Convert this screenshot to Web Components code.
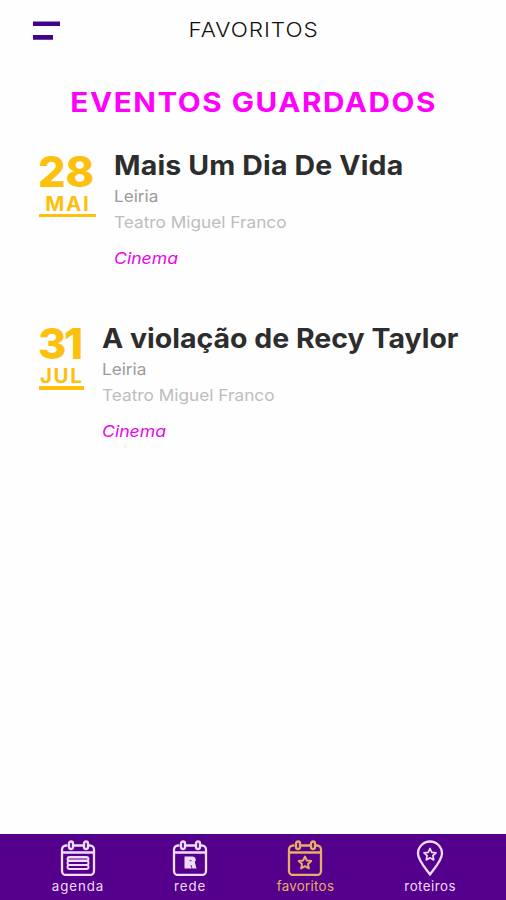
<!DOCTYPE html>
<html lang="pt">
<head>
<meta charset="utf-8">
<title>Favoritos</title>
<style>
  body {
    margin: 0;
    background: #fefefe;
    font-family: Inter, "Open Sans", sans-serif;
  }
</style>
</head>
<body>
<favorites-app>
  <app-header slot="header">FAVORITOS</app-header>
  <section-title>EVENTOS GUARDADOS</section-title>
  <event-card day="28" month="MAI" city="Leiria" venue="Teatro Miguel Franco" category="Cinema"
    style="--date-width: 57.5px; --title-spacing: 0.15px">Mais Um Dia De Vida</event-card>
  <event-card day="31" month="JUL" city="Leiria" venue="Teatro Miguel Franco" category="Cinema"
    style="--date-width: 45.5px; --day-spacing: -2.4px">A violação de Recy Taylor</event-card>
  <nav-bar slot="footer">
    <nav-item icon="agenda" style="width: 51px; --spacing: 0.9px">agenda</nav-item>
    <nav-item icon="rede" style="width: 32px; --spacing: 0.9px">rede</nav-item>
    <nav-item icon="favoritos" active style="width: 58px; --spacing: 0.3px">favoritos</nav-item>
    <nav-item icon="roteiros" style="width: 50px; --spacing: 0.5px">roteiros</nav-item>
  </nav-bar>
</favorites-app>

<script>
class FavoritesApp extends HTMLElement {
  constructor() {
    super();
    this.attachShadow({ mode: 'open' });
  }

  connectedCallback() {
    this.shadowRoot.innerHTML = `
      <style>
        :host {
          display: flex;
          flex-direction: column;
          height: 900px;
          overflow: hidden;
        }
        main { flex: 1; }
      </style>
      <slot name="header"></slot>
      <main><slot></slot></main>
      <slot name="footer"></slot>
    `;
  }
}

class AppHeader extends HTMLElement {
  constructor() {
    super();
    this.attachShadow({ mode: 'open' });
  }

  connectedCallback() {
    this.shadowRoot.innerHTML = `
      <style>
        :host {
          display: grid;
          grid-template-columns: 60px 1fr 60px;
          align-items: center;
          height: 59px;
          padding: 0 0 0 33px;
          box-sizing: border-box;
        }
        .menu { display: block; }
        h1 {
          margin: 0;
          justify-self: center;
          font-size: 20.5px;
          font-weight: 300;
          line-height: 59px;
          letter-spacing: 0.85px;
          color: #111;
          transform: translateX(-15.5px) scaleX(1.1);
        }
      </style>
      <svg class="menu" width="28" height="22" viewBox="0 0 28 22">
        <path d="M0 4.700h27M0 18.400h20" stroke="#40038a" stroke-width="4.600"/>
      </svg>
      <h1><slot></slot></h1>
    `;
  }
}

class SectionTitle extends HTMLElement {
  constructor() {
    super();
    this.attachShadow({ mode: 'open' });
  }

  connectedCallback() {
    this.shadowRoot.innerHTML = `
      <style>
        :host {
          display: flex;
          justify-content: center;
          padding: 24px 0 21px;
        }
        h2 {
          margin: 0;
          font-size: 27px;
          font-weight: 650;
          line-height: 40px;
          letter-spacing: 1.4px;
          white-space: nowrap;
          color: #ff00fc;
          transform: translateX(1px) scaleX(1.1);
        }
      </style>
      <h2><slot></slot></h2>
    `;
  }
}

class EventCard extends HTMLElement {
  constructor() {
    super();
    this.attachShadow({ mode: 'open' });
  }

  connectedCallback() {
    const day = this.getAttribute('day');
    const month = this.getAttribute('month');
    const city = this.getAttribute('city');
    const venue = this.getAttribute('venue');
    const category = this.getAttribute('category');

    this.shadowRoot.innerHTML = `
      <style>
        :host {
          display: flex;
          gap: 17.5px;
          padding-left: 38.5px;
          height: 133px;
          margin-bottom: 39.5px;
          white-space: nowrap;
        }
        .date {
          width: var(--date-width);
          color: #fdc10d;
          font-weight: 800;
        }
        .day {
          padding-top: 6.5px;
          font-size: 42px;
          line-height: 42px;
          letter-spacing: var(--day-spacing, 0);
          transform: translateX(-1px) scaleX(1.03);
          transform-origin: left;
        }
        .month {
          margin-top: 3px;
          font-size: 19.5px;
          font-weight: 750;
          line-height: 17px;
          letter-spacing: 1.6px;
          text-align: center;
          transform: scaleX(1.05);
        }
        .line {
          height: 3.5px;
          margin-top: 1px;
          background: #fdc10d;
        }
        .info > * {
          margin: 0;
          transform-origin: left;
        }
        h3 {
          font-size: 27px;
          font-weight: 700;
          line-height: 43px;
          letter-spacing: var(--title-spacing, 0);
          color: #2d2d2d;
          transform: scaleX(1.055);
        }
        .city {
          font-size: 16.5px;
          line-height: 18px;
          color: #9b9b9b;
          transform: scaleX(1.04);
        }
        .venue {
          font-size: 16.5px;
          line-height: 34px;
          color: #bdbdbd;
          transform: scaleX(1.045);
        }
        .category {
          font-size: 16.5px;
          font-style: italic;
          line-height: 38px;
          color: #e807e8;
          transform: scaleX(1.07);
        }
      </style>
      <div class="date">
        <div class="day">${day}</div>
        <div class="month">${month}</div>
        <div class="line"></div>
      </div>
      <div class="info">
        <h3><slot></slot></h3>
        <p class="city">${city}</p>
        <p class="venue">${venue}</p>
        <p class="category">${category}</p>
      </div>
    `;
  }
}

class NavBar extends HTMLElement {
  constructor() {
    super();
    this.attachShadow({ mode: 'open' });
  }

  connectedCallback() {
    this.shadowRoot.innerHTML = `
      <style>
        :host {
          display: flex;
          justify-content: space-between;
          height: 66.5px;
          padding: 6.5px 51px 0 52px;
          box-sizing: border-box;
          background: #54008c;
        }
      </style>
      <slot></slot>
    `;
  }
}

const calendar = `
  <path d="M7.500 5.500H6A4 4 0 0 0 2 9.500V31a4 4 0 0 0 4 4h24a4 4 0 0 0 4-4V9.500A4 4 0 0 0 30 5.500h-1.500M12.500 5.500h11M2 12.500h32"/>
  <rect x="9" y="1.500" width="4" height="7.500" rx="2"/>
  <rect x="24" y="1.500" width="4" height="7.500" rx="2"/>
`;

const icons = {
  agenda: calendar + `
    <rect x="7.500" y="17" width="21" height="4" rx="2" fill="currentColor" fill-opacity="0.5" stroke-width="1.900"/>
    <path d="M9.500 21a2 2 0 0 0 0 4h17a2 2 0 0 0 0-4" stroke-width="1.900"/>
    <rect x="7.500" y="25" width="21" height="4" rx="2" stroke-width="1.900"/>
  `,
  rede: calendar + `
    <path d="M12.500 16.500h8a3.200 3.200 0 0 1 2.300 5.500l1.700 6.500h-12z" fill="currentColor" stroke="none"/>
    <path d="M17.500 20.700h2M19 25l1 3.500" stroke="#54008c" stroke-width="0.800"/>
  `,
  favoritos: calendar + `
    <path d="M18 16.500l1.900 4 4.400.5-3.300 3 .9 4.400-3.900-2.200-3.900 2.200.9-4.400-3.300-3 4.400-.5z" stroke-width="1.900"/>
  `,
  roteiros: `
    <path d="M18 34.500C14.500 29.500 6 20.500 6 13.500a12 12 0 0 1 24 0c0 7-8.500 16-12 21z"/>
    <path d="M18 8.500l1.800 3.800 4.200.5-3.100 2.900.8 4.200-3.700-2.100-3.700 2.100.8-4.200-3.100-2.900 4.200-.5z" stroke-width="1.700"/>
  `
};

class NavItem extends HTMLElement {
  constructor() {
    super();
    this.attachShadow({ mode: 'open' });
  }

  connectedCallback() {
    this.shadowRoot.innerHTML = `
      <style>
        :host {
          display: flex;
          flex-direction: column;
          align-items: center;
          color: #efdcf8;
        }
        :host([active]) { color: #e8ae68; }
        svg {
          flex: none;
          fill: none;
          stroke: currentColor;
          stroke-width: 2.3;
          stroke-linejoin: round;
        }
        span {
          margin-right: calc(var(--spacing) * -1);
          font-size: 13.3px;
          line-height: 20px;
          letter-spacing: var(--spacing);
        }
      </style>
      <svg width="36" height="36" viewBox="0 0 36 36">${icons[this.getAttribute('icon')]}</svg>
      <span><slot></slot></span>
    `;
  }
}

customElements.define('favorites-app', FavoritesApp);
customElements.define('app-header', AppHeader);
customElements.define('section-title', SectionTitle);
customElements.define('event-card', EventCard);
customElements.define('nav-bar', NavBar);
customElements.define('nav-item', NavItem);
</script>
</body>
</html>
